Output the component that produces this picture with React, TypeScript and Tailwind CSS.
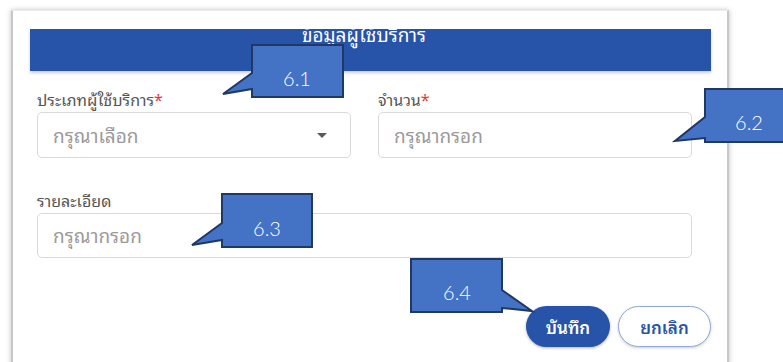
import React from "react";

const thai = { fontFamily: '"Noto Sans Thai Looped", "Noto Sans Thai", "Noto Sans", sans-serif' };
const num = { fontFamily: 'Lato, "Open Sans", sans-serif' };

function Callout({ d, label, x, y }: { d: string; label: string; x: number; y: number }) {
  return (
    <>
      <svg className="absolute left-0 top-0 pointer-events-none" width={783} height={362} viewBox="0 0 783 362">
        <path d={d} fill="#4472c4" stroke="#1f3864" strokeWidth={2} strokeLinejoin="miter" />
      </svg>
      <div
        className="absolute text-white text-[20px] font-light leading-none -translate-x-1/2 -translate-y-1/2"
        style={{ ...num, left: x, top: y }}
      >
        {label}
      </div>
    </>
  );
}

function Label({ text, required }: { text: string; required?: boolean }) {
  return (
    <div className="text-[16px] leading-[20px] text-[#555555] mb-[3px]" style={thai}>
      {text}
      {required && <span className="text-[#e53935]">*</span>}
    </div>
  );
}

export default function App() {
  return (
    <div className="relative w-[783px] h-[362px] overflow-hidden bg-white">
      <div className="ml-[11px] mt-[10px] w-[718px] h-[420px] bg-white border-t border-t-[#ececec] border-l-2 border-l-[#c8c8c8] border-r-2 border-r-[#c8c8c8] shadow-[0_0_5px_rgba(0,0,0,0.25)] pt-[18px] pl-[17px] pr-[16px]">
        <div className="h-[42px] bg-[#2753a8] overflow-hidden flex justify-center pr-[13px] shadow-[0_2px_3px_rgba(0,0,0,0.2)]">
          <div className="text-white text-[19px] leading-[22px] -mt-[6px]" style={thai}>
            ข้อมูลผู้ใช้บริการ
          </div>
        </div>

        <div className="ml-[7px] w-[655px] mt-[18px]">
          <div className="grid grid-cols-2 gap-x-[27px]">
            <div>
              <Label text="ประเภทผู้ใช้บริการ" required />
              <div className="h-[46px] border border-[#d9d9d9] rounded-[5px] flex items-center justify-between pl-[15px] pr-[23px]">
                <span className="text-[19px] text-[#9a9a9a]" style={thai}>กรุณาเลือก</span>
                <svg width="10" height="5" viewBox="0 0 10 5">
                  <path d="M0 0 H10 L5 5 Z" fill="#5a5a5a" />
                </svg>
              </div>
            </div>
            <div>
              <Label text="จำนวน" required />
              <div className="h-[46px] border border-[#d9d9d9] rounded-[5px] flex items-center pl-[15px]">
                <span className="text-[19px] text-[#9a9a9a]" style={thai}>กรุณากรอก</span>
              </div>
            </div>
          </div>

          <div className="mt-[32px]">
            <Label text="รายละเอียด" />
            <div className="h-[45px] border border-[#d9d9d9] rounded-[5px] flex items-center pl-[15px]">
              <span className="text-[19px] text-[#9a9a9a]" style={thai}>กรุณากรอก</span>
            </div>
          </div>
        </div>

        <div className="flex justify-end gap-[8px] mt-[48px]">
          <button
            className="w-[84px] h-[41px] rounded-full bg-[#2753a8] text-white text-[17px] font-semibold shadow-[0_1px_3px_rgba(0,0,0,0.3)]"
            style={thai}
          >
            บันทึก
          </button>
          <button
            className="w-[93px] h-[41px] rounded-full bg-white border-[1.5px] border-[#8ea6d8] text-[#2753a8] text-[17px] font-semibold shadow-[0_1px_3px_rgba(0,0,0,0.2)]"
            style={thai}
          >
            ยกเลิก
          </button>
        </div>
      </div>

      <Callout d="M252 45 H343 V97 H252 V89 L223 94 L252 73 Z" label="6.1" x={297} y={78} />
      <Callout d="M705 89 H800 V142 H705 V138 L675 141 L705 117 Z" label="6.2" x={749} y={122} />
      <Callout d="M222 194 H312 V247 H222 V240 L192 245 L222 223 Z" label="6.3" x={267} y={228} />
      <Callout d="M411 259 H502 V290 L532 311 L502 308 V312 H411 Z" label="6.4" x={457} y={292} />
    </div>
  );
}
